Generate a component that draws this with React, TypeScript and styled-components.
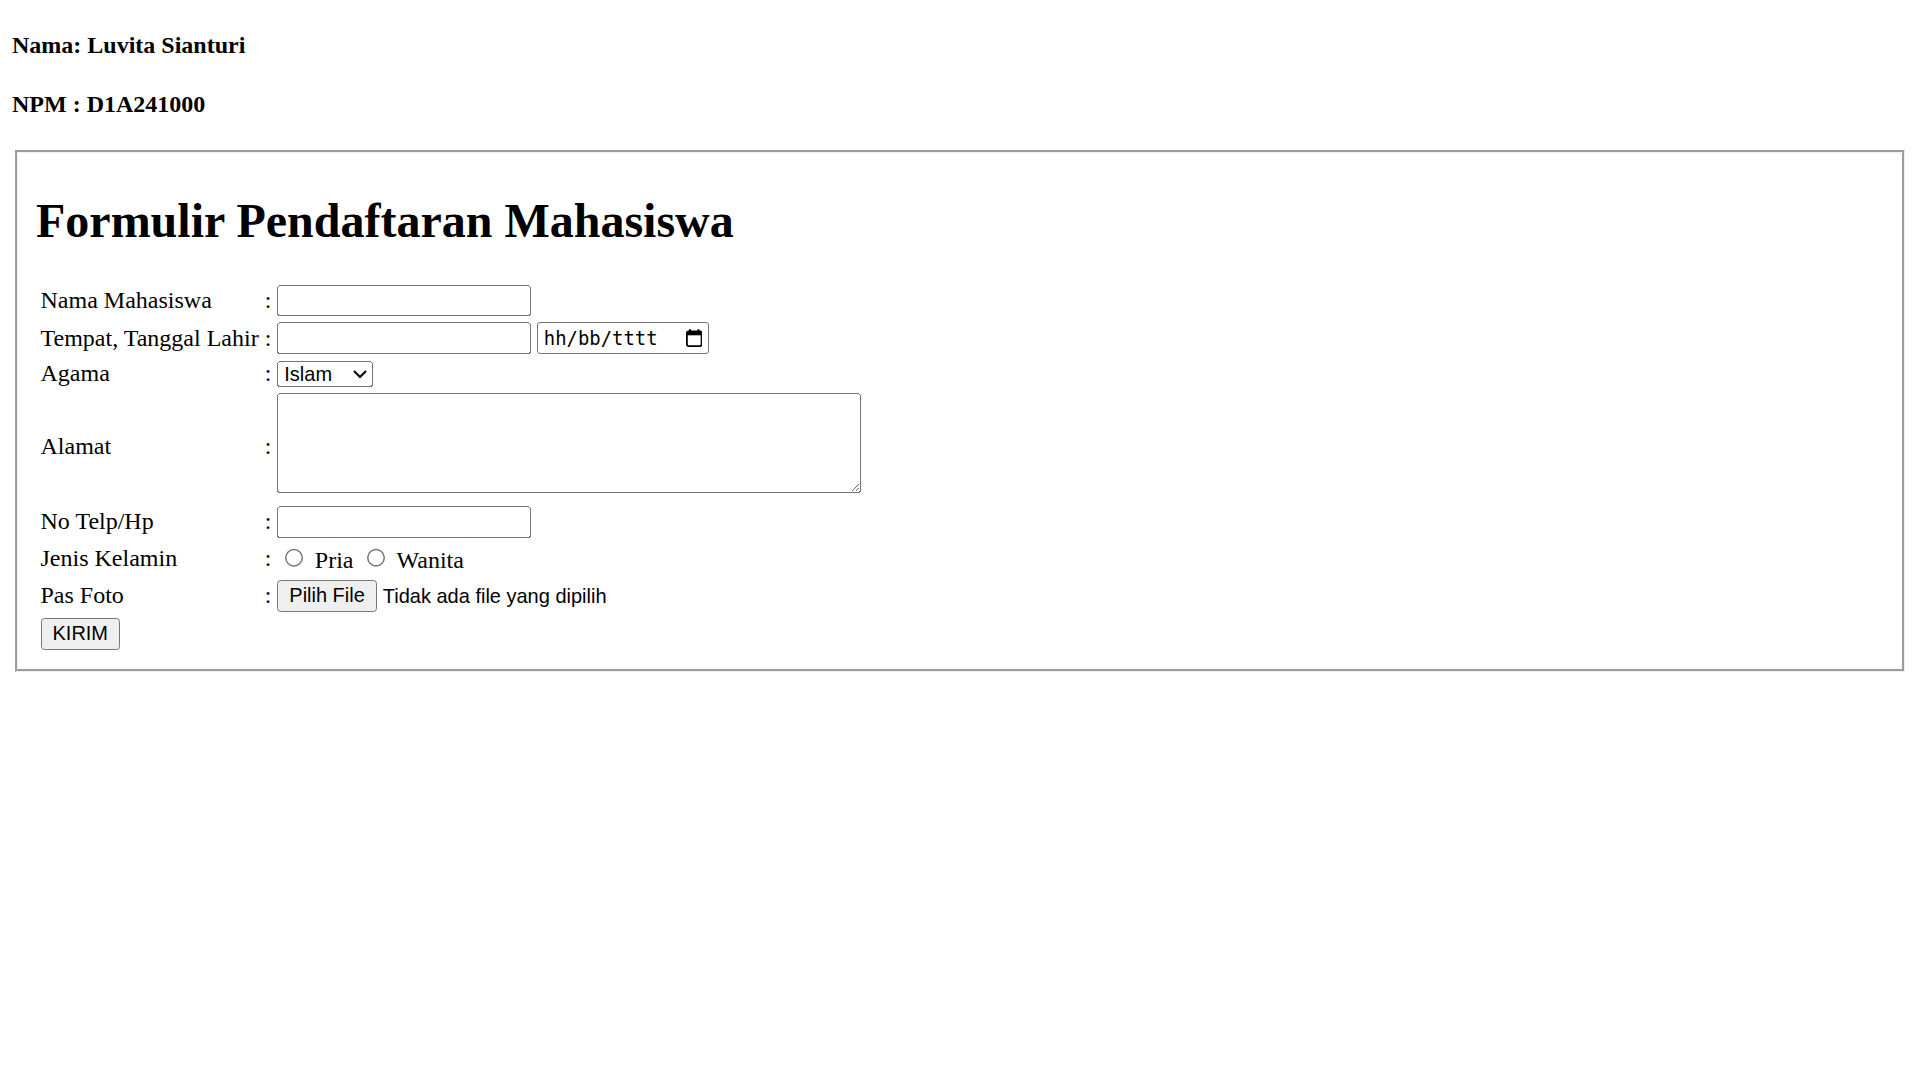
import React from 'react';
import styled, { createGlobalStyle } from 'styled-components';

const GlobalStyle = createGlobalStyle`
  body {
    margin: 0 12px 12px;
    background: #fff;
    color: #000;
    font-family: 'Liberation Serif', 'Times New Roman', serif;
  }
`;

// the original page was captured at 150% browser zoom
const Page = styled.div`
  zoom: 1.5;
  font-size: 16px;
`;

const Identity = styled.h4`
  font-size: 16px;
  font-weight: bold;
  margin: 1.33em 0;
`;

const Fieldset = styled.fieldset`
  margin: 0 2px;
  padding: 0.35em 0.75em 0.625em;
  border: 2px groove rgb(240, 240, 240);
  min-width: min-content;
`;

const Title = styled.h1`
  font-size: 2em;
  font-weight: bold;
  margin: 0.67em 0;
`;

const FieldTable = styled.table`
  border-spacing: 2px;
  border-collapse: separate;
`;

const Cell = styled.td`
  padding: 1px;
  vertical-align: middle;
`;

const controlFont = `
  font-family: 'Liberation Sans', Arial, sans-serif;
  font-size: 13.3333px;
`;

const TextInput = styled.input`
  ${controlFont}
  box-sizing: border-box;
  width: 169px;
  height: 21px;
`;

const DateBox = styled.span`
  display: inline-flex;
  align-items: center;
  justify-content: space-between;
  box-sizing: border-box;
  width: 115px;
  height: 21px;
  padding: 0 4px 0 4px;
  border: 1px solid #767676;
  border-radius: 2px;
  vertical-align: bottom;
  font-family: 'DejaVu Sans Mono', 'Liberation Mono', monospace;
  font-size: 12.6px;
  color: #000;
`;

const Select = styled.select`
  ${controlFont}
  width: 64px;
`;

const TextArea = styled.textarea`
  font-family: 'Liberation Mono', monospace;
  font-size: 13.3333px;
  box-sizing: border-box;
  width: 389px;
  height: 67px;
  margin-bottom: 0.5px;
`;

const Radio = styled.input`
  margin: 3px 3px 0 5px;
`;

const Button = styled.button<{ $gap?: number }>`
  ${controlFont}
  margin-right: ${({ $gap }) => $gap ?? 0}px;
`;

const FileNote = styled.span`
  ${controlFont}
`;

const CalendarIcon = () => (
  <svg width="11" height="12" viewBox="0 0 11 12">
    <rect x="0.6" y="1.6" width="9.8" height="9.8" rx="1.2" fill="none" stroke="#000" strokeWidth="1.2" />
    <rect x="0.6" y="1.6" width="9.8" height="2.6" fill="#000" />
    <rect x="2" y="0.2" width="1.4" height="2" fill="#000" />
    <rect x="7.6" y="0.2" width="1.4" height="2" fill="#000" />
  </svg>
);

const agama = ['Islam', 'Kristen', 'Katolik', 'Hindu', 'Buddha', 'Konghucu'];

const App = () => (
  <>
    <GlobalStyle />
    <Page>
      <Identity>Nama: Luvita Sianturi</Identity>
      <Identity>NPM : D1A241000</Identity>
      <form onSubmit={(e) => e.preventDefault()}>
        <Fieldset>
          <Title>Formulir Pendaftaran Mahasiswa</Title>
          <FieldTable>
            <tbody>
              <tr>
                <Cell>Nama Mahasiswa</Cell>
                <Cell>:</Cell>
                <Cell>
                  <TextInput type='text' />
                </Cell>
              </tr>
              <tr>
                <Cell>Tempat, Tanggal Lahir</Cell>
                <Cell>:</Cell>
                <Cell>
                  <TextInput type='text' />{' '}
                  <DateBox>
                    hh/bb/tttt
                    <CalendarIcon />
                  </DateBox>
                </Cell>
              </tr>
              <tr>
                <Cell>Agama</Cell>
                <Cell>:</Cell>
                <Cell>
                  <Select defaultValue='Islam'>
                    {agama.map((a) => (
                      <option key={a}>{a}</option>
                    ))}
                  </Select>
                </Cell>
              </tr>
              <tr>
                <Cell>Alamat</Cell>
                <Cell>:</Cell>
                <Cell>
                  <TextArea />
                </Cell>
              </tr>
              <tr>
                <Cell>No Telp/Hp</Cell>
                <Cell>:</Cell>
                <Cell>
                  <TextInput type='text' />
                </Cell>
              </tr>
              <tr>
                <Cell>Jenis Kelamin</Cell>
                <Cell>:</Cell>
                <Cell>
                  <Radio type='radio' name='jk' value='pria' /> Pria{' '}
                  <Radio type='radio' name='jk' value='wanita' /> Wanita
                </Cell>
              </tr>
              <tr>
                <Cell>Pas Foto</Cell>
                <Cell>:</Cell>
                <Cell>
                  <Button type='button' $gap={4}>Pilih File</Button>
                  <FileNote>Tidak ada file yang dipilih</FileNote>
                </Cell>
              </tr>
              <tr>
                <Cell>
                  <Button type='submit'>KIRIM</Button>
                </Cell>
              </tr>
            </tbody>
          </FieldTable>
        </Fieldset>
      </form>
    </Page>
  </>
);

export default App;
